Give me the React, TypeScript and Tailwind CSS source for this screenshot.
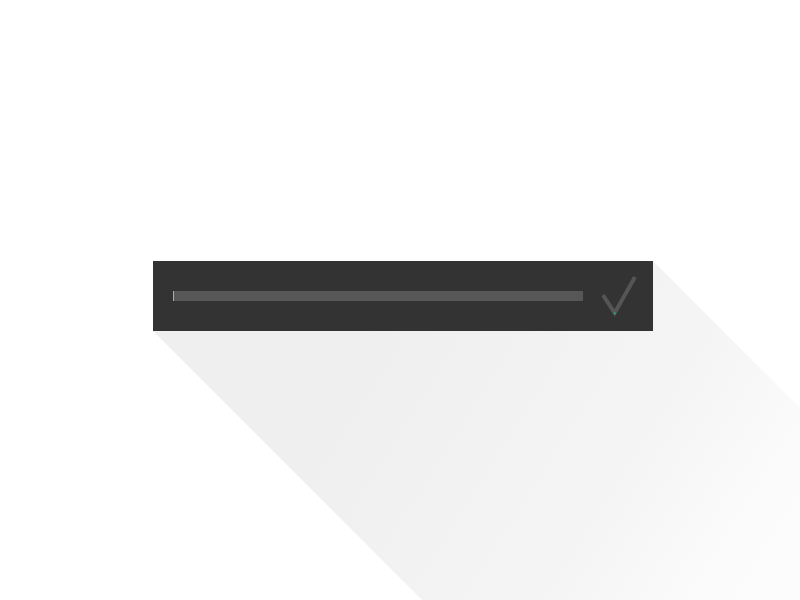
export default function App() {
  return (
    <div className="relative h-[600px] w-[800px] overflow-hidden bg-white">
      {/* long shadow */}
      <svg className="absolute inset-0" width="800" height="600" viewBox="0 0 800 600">
        <defs>
          <linearGradient id="sh" gradientUnits="userSpaceOnUse" x1="380" y1="320" x2="760" y2="560">
            <stop offset="0" stopColor="#efefef" />
            <stop offset="0.6" stopColor="#f4f4f4" />
            <stop offset="1" stopColor="#fcfcfc" />
          </linearGradient>
        </defs>
        <polygon points="153,331 653,331 653,261 1053,661 553,731" fill="url(#sh)" />
      </svg>

      <div className="relative pl-[153px] pt-[261px]">
        <div className="flex h-[70px] w-[500px] items-center bg-[#333333] pl-[20px]">
          <div className="flex h-[10px] w-[410px] bg-[#575757]">
            <div className="h-full w-px bg-[#3fe3cb]" />
          </div>
          <svg className="ml-[19px]" width="40" height="44" viewBox="0 0 40 44">
            <polyline
              points="1,21 12.7,39 33,3"
              fill="none"
              stroke="#555555"
              strokeWidth="4"
              strokeLinejoin="miter"
            />
            <rect x="12" y="38.5" width="1.5" height="1.5" fill="#2fbf8f" />
          </svg>
        </div>
      </div>
    </div>
  );
}
